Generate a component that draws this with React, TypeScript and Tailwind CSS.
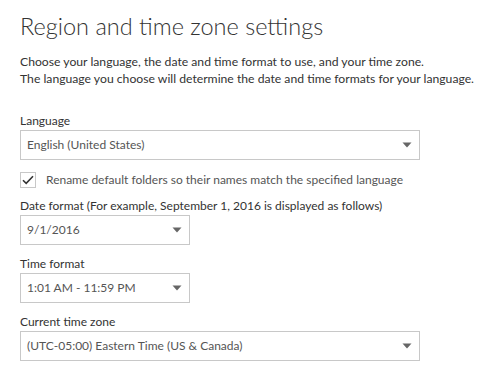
const font = { fontFamily: 'Lato, "Open Sans", sans-serif' };

function Caret() {
  return (
    <svg width="10" height="6" viewBox="0 0 10 6" className="shrink-0">
      <path d="M0.5 0.5h9L5 5.5z" fill="#666" />
    </svg>
  );
}

function Select({ value, width }: { value: string; width: string }) {
  return (
    <div
      className={`flex items-center justify-between h-[30px] border border-[#c8c8c8] bg-white pl-[6px] pr-[7px] text-[12px] text-[#555] ${width}`}
    >
      <span>{value}</span>
      <Caret />
    </div>
  );
}

function Label({ children }: { children: React.ReactNode }) {
  return <div className="text-[12px] text-[#333] leading-[17px] mb-[1px]">{children}</div>;
}

export default function App() {
  return (
    <div className="w-[494px] h-[386px] bg-white px-5 pt-[9px] overflow-hidden" style={font}>
      <h1 className="text-[23.5px] font-light text-[#333] leading-[34px]">
        Region and time zone settings
      </h1>

      <p className="mt-[10px] text-[12.2px] leading-[17px] text-[#333] whitespace-nowrap">
        Choose your language, the date and time format to use, and your time zone.
        <br />
        The language you choose will determine the date and time formats for your language.
      </p>

      <div className="mt-[25px]">
        <Label>Language</Label>
        <Select value="English (United States)" width="w-[400px]" />
      </div>

      <div className="mt-[12px] h-4 flex items-center gap-[10px]">
        <div className="w-4 h-4 border border-[#c8c8c8] flex items-center justify-center">
          <svg width="12" height="10" viewBox="0 0 12 10">
            <path d="M1 5.2l3.2 3.2L11 1.2" fill="none" stroke="#333" strokeWidth="1.6" />
          </svg>
        </div>
        <span className="text-[12px] text-[#555]">Rename default folders so their names match the specified language</span>
      </div>

      <div className="mt-[9px]">
        <Label>Date format (For example, September 1, 2016 is displayed as follows)</Label>
        <Select value="9/1/2016" width="w-[170px]" />
      </div>

      <div className="mt-[10px]">
        <Label>Time format</Label>
        <Select value="1:01 AM - 11:59 PM" width="w-[170px]" />
      </div>

      <div className="mt-[10px]">
        <Label>Current time zone</Label>
        <Select value="(UTC-05:00) Eastern Time (US &amp; Canada)" width="w-[400px]" />
      </div>
    </div>
  );
}
